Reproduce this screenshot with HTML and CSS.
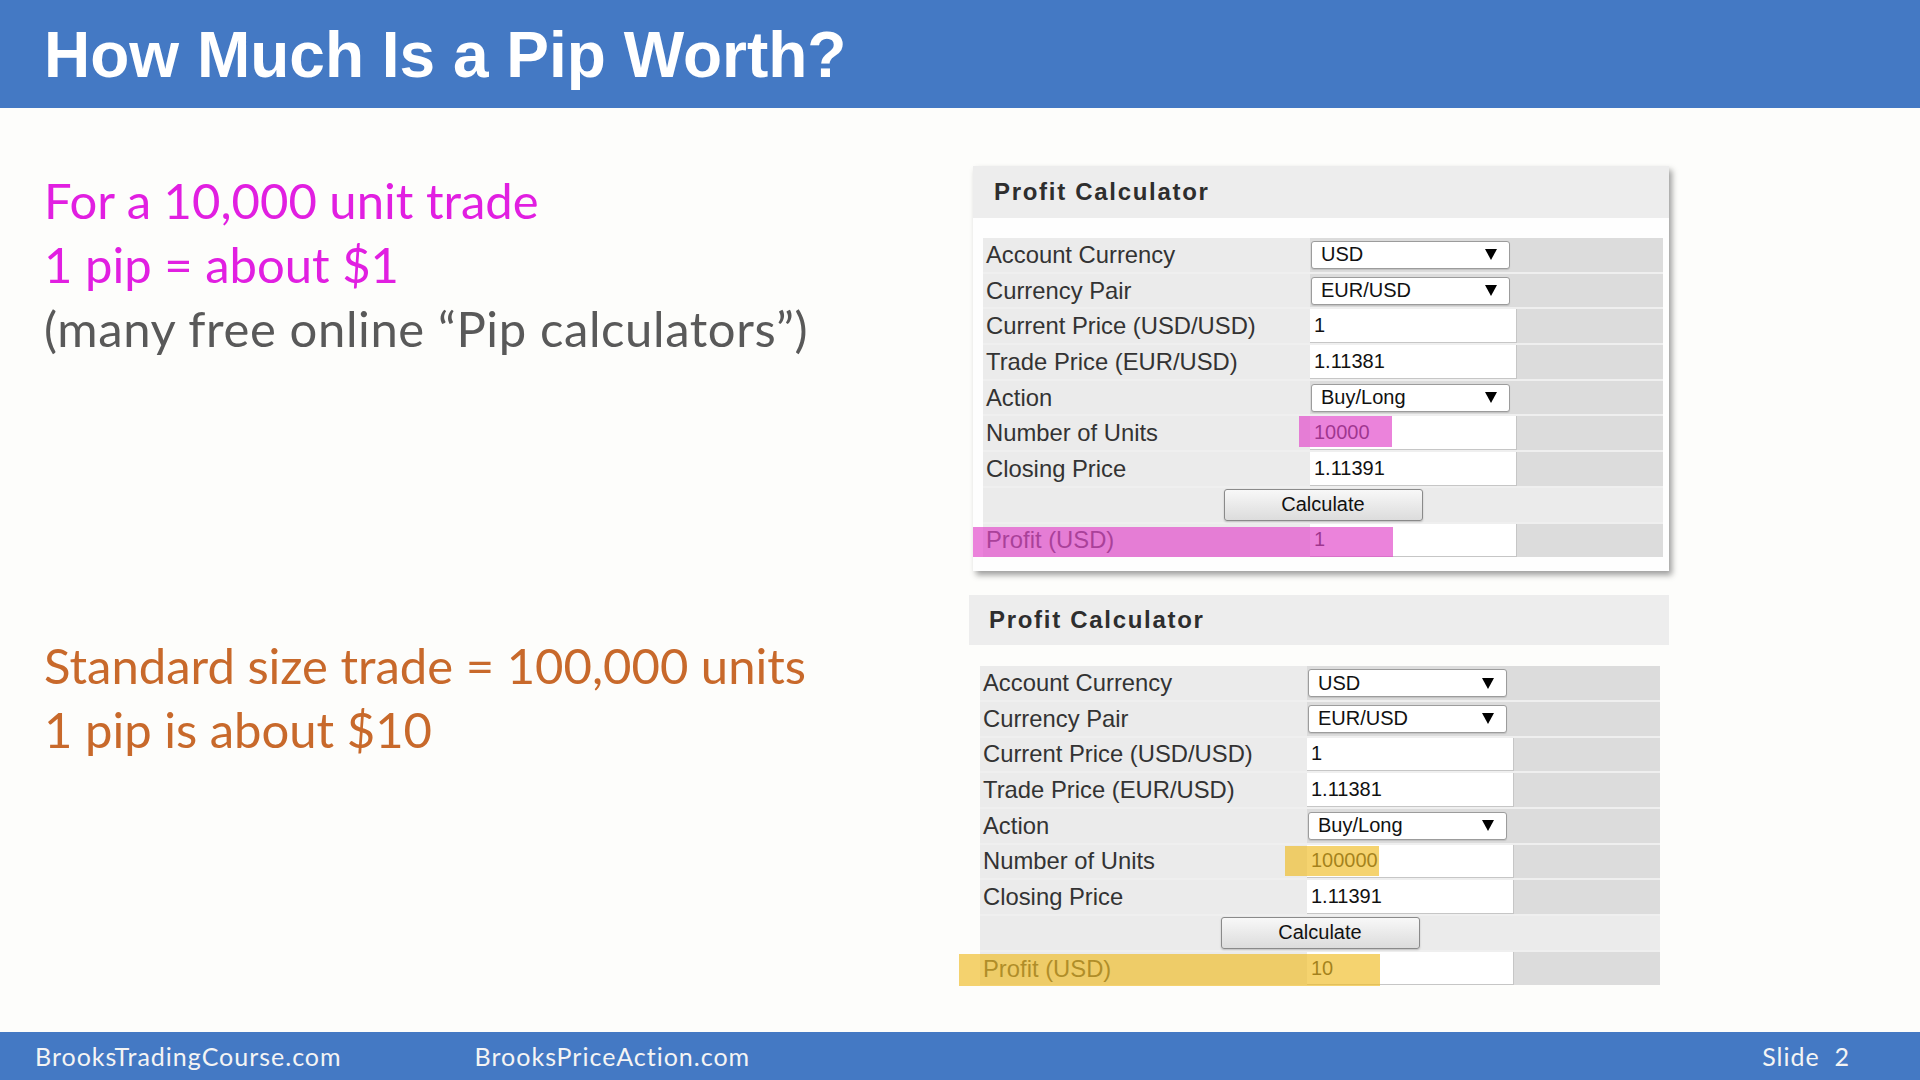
FILE: index.html
```html
<!DOCTYPE html>
<html lang="en">
<head>
<meta charset="utf-8">
<title>How Much Is a Pip Worth?</title>
<link rel="stylesheet" href="styles.css">
</head>
<body>
<header class="topbar">
  <h1 class="title">How Much Is a Pip Worth?</h1>
</header>
<main class="main">
  <section class="left">
    <div class="block block-top">
      <p class="line magenta">For a 10,000 unit trade</p>
      <p class="line magenta">1 pip = about $1</p>
      <p class="line grey">(many free online “Pip calculators”)</p>
    </div>
    <div class="block block-bottom">
      <p class="line orange">Standard size trade = 100,000 units</p>
      <p class="line orange">1 pip is about $10</p>
    </div>
  </section>
  <section class="right">
    <div class="calc calc-one">
      <div class="calc-head">Profit Calculator</div>
      <div class="calc-table">
        <div class="row"><div class="lbl">Account Currency</div><div class="val"><div class="sel"><span>USD</span><svg class="arrow" viewBox="0 0 12 11"><path d="M0 0H12L6 11Z"/></svg></div></div></div>
        <div class="row"><div class="lbl">Currency Pair</div><div class="val"><div class="sel"><span>EUR/USD</span><svg class="arrow" viewBox="0 0 12 11"><path d="M0 0H12L6 11Z"/></svg></div></div></div>
        <div class="row"><div class="lbl">Current Price (USD/USD)</div><div class="val"><div class="inp">1</div></div></div>
        <div class="row"><div class="lbl">Trade Price (EUR/USD)</div><div class="val"><div class="inp">1.11381</div></div></div>
        <div class="row"><div class="lbl">Action</div><div class="val"><div class="sel"><span>Buy/Long</span><svg class="arrow" viewBox="0 0 12 11"><path d="M0 0H12L6 11Z"/></svg></div></div></div>
        <div class="row"><div class="lbl">Number of Units</div><div class="val"><div class="inp">10000</div></div><div class="hl hl-units"></div></div>
        <div class="row"><div class="lbl">Closing Price</div><div class="val"><div class="inp">1.11391</div></div></div>
        <div class="row btnrow"><div class="btn">Calculate</div></div>
        <div class="row"><div class="lbl">Profit (USD)</div><div class="val"><div class="inp">1</div></div><div class="hl hl-profit"></div></div>
      </div>
    </div>
    <div class="calc calc-two">
      <div class="calc-head">Profit Calculator</div>
      <div class="calc-table">
        <div class="row"><div class="lbl">Account Currency</div><div class="val"><div class="sel"><span>USD</span><svg class="arrow" viewBox="0 0 12 11"><path d="M0 0H12L6 11Z"/></svg></div></div></div>
        <div class="row"><div class="lbl">Currency Pair</div><div class="val"><div class="sel"><span>EUR/USD</span><svg class="arrow" viewBox="0 0 12 11"><path d="M0 0H12L6 11Z"/></svg></div></div></div>
        <div class="row"><div class="lbl">Current Price (USD/USD)</div><div class="val"><div class="inp">1</div></div></div>
        <div class="row"><div class="lbl">Trade Price (EUR/USD)</div><div class="val"><div class="inp">1.11381</div></div></div>
        <div class="row"><div class="lbl">Action</div><div class="val"><div class="sel"><span>Buy/Long</span><svg class="arrow" viewBox="0 0 12 11"><path d="M0 0H12L6 11Z"/></svg></div></div></div>
        <div class="row"><div class="lbl">Number of Units</div><div class="val"><div class="inp">100000</div></div><div class="hl hl-units"></div></div>
        <div class="row"><div class="lbl">Closing Price</div><div class="val"><div class="inp">1.11391</div></div></div>
        <div class="row btnrow"><div class="btn">Calculate</div></div>
        <div class="row"><div class="lbl">Profit (USD)</div><div class="val"><div class="inp">10</div></div><div class="hl hl-profit"></div></div>
      </div>
    </div>
  </section>
</main>
<footer class="footbar">
  <span class="foot-a">BrooksTradingCourse.com</span>
  <span class="foot-b">BrooksPriceAction.com</span>
  <span class="foot-c">Slide&nbsp;&nbsp;2</span>
</footer>
</body>
</html>
```
FILE: styles.css
```css
html, body {
  margin: 0;
  padding: 0;
}
body {
  width: 1920px;
  height: 1080px;
  overflow: hidden;
  background: #fdfdfb;
  display: flex;
  flex-direction: column;
  font-family: "Liberation Sans", Arial, sans-serif;
}
.topbar {
  height: 108px;
  background: #4479c4;
  box-sizing: border-box;
  padding: 23px 0 0 44px;
}
.title {
  margin: 0;
  color: #ffffff;
  font: bold 64px/64px "Liberation Sans", Arial, sans-serif;
}
.main {
  flex: 1;
  display: flex;
}
.left {
  width: 969px;
  box-sizing: border-box;
  padding-left: 44px;
  font-family: Lato, "Open Sans", sans-serif;
}
.block-top {
  margin-top: 60px;
}
.block-bottom {
  margin-top: 273px;
}
.line {
  margin: 0;
  font-size: 49px;
  line-height: 64px;
  white-space: nowrap;
}
.magenta { color: #e11fe1; }
.grey { color: #595959; letter-spacing: 0.6px; }
.orange { color: #c8692b; }

.right {
  width: 700px;
  padding-top: 58px;
}
.calc-head {
  height: 52px;
  background: #ededed;
  display: flex;
  align-items: center;
  padding-left: 21px;
  font: bold 24px "Liberation Sans", Arial, sans-serif;
  letter-spacing: 1.7px;
  color: #2e2e2e;
}
.calc-one {
  margin-left: 4px;
  width: 696px;
  background: #fefefe;
  box-shadow: 3px 4px 6px rgba(0, 0, 0, 0.38);
  padding-bottom: 14px;
}
.calc-one .calc-table {
  margin: 20px 6px 0 10px;
}
.calc-two {
  margin-top: 24px;
  width: 700px;
}
.calc-two .calc-head {
  height: 50px;
  padding-left: 20px;
}
.calc-two .calc-table {
  margin: 21px 9px 0 11px;
}
.calc-table {
  display: flex;
  flex-direction: column;
  gap: 2px;
  background: #efefef;
}
.row {
  position: relative;
  height: 33.7px;
  display: grid;
  grid-template-columns: 327px 1fr;
}
.lbl {
  background: #ebebeb;
  padding-left: 3px;
  display: flex;
  align-items: center;
  font-size: 23.8px;
  color: #333333;
  white-space: nowrap;
}
.val {
  background: #dcdcdc;
  display: flex;
  align-items: center;
}
.sel {
  margin-left: 1px;
  width: 199px;
  height: 28px;
  box-sizing: border-box;
  border: 1px solid #9c9c9c;
  border-radius: 3px;
  background: #ffffff;
  box-shadow: 0 1px 1px rgba(0, 0, 0, 0.12);
  display: flex;
  align-items: center;
  justify-content: space-between;
  padding: 0 12px 0 9px;
  font-size: 20px;
  color: #111111;
}
.arrow {
  width: 12px;
  height: 11px;
  fill: #000000;
}
.inp {
  width: 207px;
  height: 100%;
  box-sizing: border-box;
  background: #ffffff;
  border-right: 1px solid #c6c6c6;
  border-bottom: 1px solid #c6c6c6;
  padding-left: 4px;
  display: flex;
  align-items: center;
  font-size: 20px;
  color: #111111;
}
.btnrow {
  grid-template-columns: 1fr;
  background: #ebebeb;
  justify-items: center;
  align-items: center;
}
.btn {
  width: 199px;
  height: 32px;
  box-sizing: border-box;
  border: 1px solid #8a8a8a;
  border-radius: 3px;
  background: linear-gradient(#f8f8f8, #dcdcdc);
  box-shadow: 0 1px 2px rgba(0, 0, 0, 0.2);
  display: flex;
  align-items: center;
  justify-content: center;
  font-size: 20px;
  color: #111111;
}
.hl {
  position: absolute;
}
.calc-one .hl {
  background: rgba(226, 72, 202, 0.68);
}
.calc-two .hl {
  background: rgba(240, 188, 36, 0.66);
}
.calc-one .hl-units {
  left: 316px;
  width: 93px;
  top: 0;
  height: 31px;
}
.calc-one .hl-profit {
  left: -10px;
  width: 420px;
  top: 3px;
  height: 30px;
}
.calc-two .hl-units {
  left: 305px;
  width: 94px;
  top: 1px;
  height: 30px;
}
.calc-two .hl-profit {
  left: -21px;
  width: 421px;
  top: 2px;
  height: 32px;
}
.footbar {
  height: 48px;
  background: #4479c4;
  display: flex;
  align-items: center;
  color: #f4f4f4;
  font-family: Lato, "Open Sans", sans-serif;
  font-size: 25px;
  letter-spacing: 1px;
}
.foot-a {
  margin-left: 35px;
}
.foot-b {
  margin-left: 133px;
}
.foot-c {
  margin-left: auto;
  margin-right: 70px;
}
```
